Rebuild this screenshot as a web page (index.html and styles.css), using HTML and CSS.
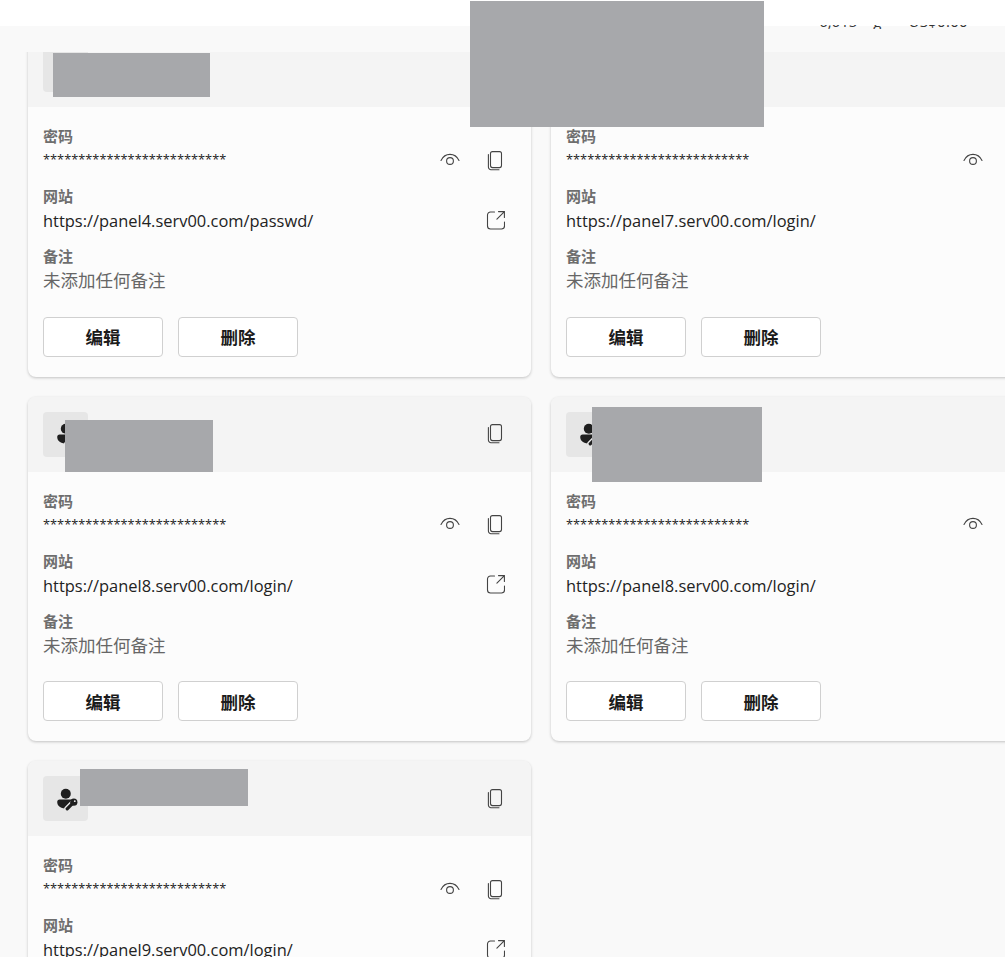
FILE: index.html
```html
<!DOCTYPE html>
<html>
<head>
  <title>密码管理</title>
  <link rel="stylesheet" href="styles.css">
</head>
<body>

  <svg class="defs" width="0" height="0">
    <symbol id="i-copy" viewBox="0 0 20 20">
      <rect x="5.500" y="0.600" width="11" height="16" rx="2" fill="none" stroke="currentColor" stroke-width="1.100"/>
      <path d="M3.400 3.500v12.600A2.600 2.600 0 0 0 6 18.700h8" fill="none" stroke="currentColor" stroke-width="1.100" stroke-linecap="round"/>
    </symbol>
    <symbol id="i-eye" viewBox="0 0 20 20">
      <path d="M1 9.500C3 5.400 6.200 3.400 10 3.400s7 2 9 6.100" fill="none" stroke="currentColor" stroke-width="1.100" stroke-linecap="round"/>
      <circle cx="10" cy="10" r="3.400" fill="none" stroke="currentColor" stroke-width="1.100"/>
    </symbol>
    <symbol id="i-open" viewBox="0 0 20 20">
      <path d="M9.500 1H5.500A3 3 0 0 0 2.500 4v11a3 3 0 0 0 3 3h11a3 3 0 0 0 3-3v-4" fill="none" stroke="currentColor" stroke-width="1.100" stroke-linecap="round"/>
      <path d="M13.500 0.600h5.900v5.900M19.400 0.600l-7.500 7.500" fill="none" stroke="currentColor" stroke-width="1.100" stroke-linecap="round"/>
    </symbol>
    <symbol id="i-user" viewBox="0 0 24 24">
      <circle cx="11.800" cy="6.800" r="5" fill="currentColor"/>
      <path d="M3.200 15a2.500 2.500 0 0 1 2.500-2.500h11c2 0 4 1.500 4 3L13 21.700C7.500 21.700 3.200 19.500 3.200 15z" fill="currentColor"/>
      <path d="M13.200 21.800l6.400-6.400" stroke="#e6e6e6" stroke-width="6" stroke-linecap="round"/>
      <path d="M13.200 21.800l6.400-6.400" stroke="currentColor" stroke-width="3.200" stroke-linecap="round"/>
      <circle cx="19.800" cy="15.200" r="3.600" fill="currentColor"/>
      <circle cx="20.800" cy="14.200" r="0.900" fill="#e6e6e6"/>
    </symbol>
  </svg>

  <div class="topbar">
    <div class="topbar-stats">
      <div class="topbar-line">
        <span class="stat-count">6,615</span>
        <span class="stat-unit">g</span>
        <span class="stat-money">US$0.00</span>
      </div>
    </div>
  </div>

  <div class="content">
    <div class="card-grid">

      <div class="card">
        <div class="card-head">
          <div class="avatar"><svg class="icon-user"><use href="#i-user"/></svg></div>
          <button class="icon-btn"><svg class="icon"><use href="#i-copy"/></svg></button>
        </div>
        <div class="card-body">
          <div class="field">
            <div class="label">密码</div>
            <div class="row">
              <div class="stars">**************************</div>
              <button class="icon-btn"><svg class="icon"><use href="#i-eye"/></svg></button>
              <button class="icon-btn"><svg class="icon"><use href="#i-copy"/></svg></button>
            </div>
          </div>
          <div class="field">
            <div class="label">网站</div>
            <div class="row">
              <div class="url">https://panel4.serv00.com/passwd/</div>
              <button class="icon-btn"><svg class="icon"><use href="#i-open"/></svg></button>
            </div>
          </div>
          <div class="field">
            <div class="label">备注</div>
            <div class="row"><div class="note">未添加任何备注</div></div>
          </div>
          <div class="actions">
            <button class="btn">编辑</button>
            <button class="btn">删除</button>
          </div>
        </div>
      </div>

      <div class="card">
        <div class="card-head">
          <div class="avatar"><svg class="icon-user"><use href="#i-user"/></svg></div>
          <button class="icon-btn"><svg class="icon"><use href="#i-copy"/></svg></button>
        </div>
        <div class="card-body">
          <div class="field">
            <div class="label">密码</div>
            <div class="row">
              <div class="stars">**************************</div>
              <button class="icon-btn"><svg class="icon"><use href="#i-eye"/></svg></button>
              <button class="icon-btn"><svg class="icon"><use href="#i-copy"/></svg></button>
            </div>
          </div>
          <div class="field">
            <div class="label">网站</div>
            <div class="row">
              <div class="url">https://panel7.serv00.com/login/</div>
              <button class="icon-btn"><svg class="icon"><use href="#i-open"/></svg></button>
            </div>
          </div>
          <div class="field">
            <div class="label">备注</div>
            <div class="row"><div class="note">未添加任何备注</div></div>
          </div>
          <div class="actions">
            <button class="btn">编辑</button>
            <button class="btn">删除</button>
          </div>
        </div>
      </div>

      <div class="card">
        <div class="card-head">
          <div class="avatar"><svg class="icon-user"><use href="#i-user"/></svg></div>
          <button class="icon-btn"><svg class="icon"><use href="#i-copy"/></svg></button>
        </div>
        <div class="card-body">
          <div class="field">
            <div class="label">密码</div>
            <div class="row">
              <div class="stars">**************************</div>
              <button class="icon-btn"><svg class="icon"><use href="#i-eye"/></svg></button>
              <button class="icon-btn"><svg class="icon"><use href="#i-copy"/></svg></button>
            </div>
          </div>
          <div class="field">
            <div class="label">网站</div>
            <div class="row">
              <div class="url">https://panel8.serv00.com/login/</div>
              <button class="icon-btn"><svg class="icon"><use href="#i-open"/></svg></button>
            </div>
          </div>
          <div class="field">
            <div class="label">备注</div>
            <div class="row"><div class="note">未添加任何备注</div></div>
          </div>
          <div class="actions">
            <button class="btn">编辑</button>
            <button class="btn">删除</button>
          </div>
        </div>
      </div>

      <div class="card">
        <div class="card-head">
          <div class="avatar"><svg class="icon-user"><use href="#i-user"/></svg></div>
          <button class="icon-btn"><svg class="icon"><use href="#i-copy"/></svg></button>
        </div>
        <div class="card-body">
          <div class="field">
            <div class="label">密码</div>
            <div class="row">
              <div class="stars">**************************</div>
              <button class="icon-btn"><svg class="icon"><use href="#i-eye"/></svg></button>
              <button class="icon-btn"><svg class="icon"><use href="#i-copy"/></svg></button>
            </div>
          </div>
          <div class="field">
            <div class="label">网站</div>
            <div class="row">
              <div class="url">https://panel8.serv00.com/login/</div>
              <button class="icon-btn"><svg class="icon"><use href="#i-open"/></svg></button>
            </div>
          </div>
          <div class="field">
            <div class="label">备注</div>
            <div class="row"><div class="note">未添加任何备注</div></div>
          </div>
          <div class="actions">
            <button class="btn">编辑</button>
            <button class="btn">删除</button>
          </div>
        </div>
      </div>

      <div class="card">
        <div class="card-head">
          <div class="avatar"><svg class="icon-user"><use href="#i-user"/></svg></div>
          <button class="icon-btn"><svg class="icon"><use href="#i-copy"/></svg></button>
        </div>
        <div class="card-body">
          <div class="field">
            <div class="label">密码</div>
            <div class="row">
              <div class="stars">**************************</div>
              <button class="icon-btn"><svg class="icon"><use href="#i-eye"/></svg></button>
              <button class="icon-btn"><svg class="icon"><use href="#i-copy"/></svg></button>
            </div>
          </div>
          <div class="field">
            <div class="label">网站</div>
            <div class="row">
              <div class="url">https://panel9.serv00.com/login/</div>
              <button class="icon-btn"><svg class="icon"><use href="#i-open"/></svg></button>
            </div>
          </div>
        </div>
      </div>

    </div>
  </div>

  <div class="redact redact-1"></div>
  <div class="redact redact-2"></div>
  <div class="redact redact-3"></div>
  <div class="redact redact-4"></div>
  <div class="redact redact-5"></div>

</body>
</html>
```

FILE: styles.css
```css
html, body {
  height: 100%;
}
body {
  margin: 0;
  overflow: hidden;
  background: #f9f9f9;
  font-family: "Open Sans", "Noto Sans CJK SC", sans-serif;
  color: #1b1b1b;
  display: flex;
  flex-direction: column;
  position: relative;
}
.defs {
  position: absolute;
}
.topbar {
  height: 26px;
  flex: none;
  background: #fff;
  display: flex;
  justify-content: flex-end;
  padding-right: 37px;
  box-sizing: border-box;
}
.topbar-stats {
  height: 4px;
  margin-top: 25px;
  overflow: hidden;
}
.topbar-line {
  display: flex;
  align-items: baseline;
  font-size: 15px;
  line-height: 18px;
  margin-top: -13.300px;
  color: #333;
}
.stat-unit {
  margin-left: 16px;
}
.stat-money {
  margin-left: 27px;
  letter-spacing: 0.300px;
}
.content {
  flex: 1;
  margin-top: 26px;
  overflow: hidden;
  min-height: 0;
}
.card-grid {
  display: grid;
  grid-template-columns: 503px 503px;
  gap: 20px;
  margin-top: -19.750px;
  margin-left: 28px;
  padding-bottom: 4px;
}
.card {
  background: #fcfcfc;
  border-radius: 8px;
  box-shadow: 0 1px 3px rgba(0, 0, 0, 0.22);
  overflow: hidden;
}
.card-head {
  height: 75px;
  box-sizing: border-box;
  background: #f4f4f4;
  padding: 0 26px 0 15px;
  display: flex;
  align-items: center;
  justify-content: space-between;
}
.avatar {
  width: 45px;
  height: 45px;
  border-radius: 4px;
  background: #e6e6e6;
  display: flex;
  align-items: center;
  justify-content: center;
}
.icon-user {
  width: 24px;
  height: 24px;
  color: #1f1f1f;
}
.card-body {
  padding: 19px 15px 20px;
}
.field {
  margin-bottom: 13px;
}
.label {
  font-size: 15px;
  line-height: 21px;
  padding-bottom: 1px;
  font-weight: 700;
  color: #6e6e6e;
}
.row {
  display: flex;
  align-items: center;
  height: 25px;
}
.stars, .url, .note {
  flex: 1;
}
.stars {
  font-size: 12.800px;
  line-height: 23px;
  height: 25px;
  color: #222;
}
.url {
  font-size: 16.450px;
  color: #222;
}
.note {
  font-size: 17.500px;
  line-height: 25px;
  height: 25px;
  color: #666;
}
.icon-btn {
  border: none;
  background: none;
  padding: 0;
  width: 20px;
  height: 20px;
  color: #444;
  display: block;
}
.row .icon-btn + .icon-btn {
  margin-left: 25px;
}
.row .icon-btn:first-of-type:not(:last-child) {
  margin-left: 1px;
}
.row .icon-btn:last-child {
  margin-right: 11px;
}
.icon {
  width: 20px;
  height: 20px;
  display: block;
}
.actions {
  display: flex;
  gap: 15px;
  margin-top: 23.500px;
}
.btn {
  width: 120px;
  height: 40px;
  background: #fff;
  border: 1px solid #d0d0d0;
  border-radius: 4px;
  font-family: inherit;
  font-size: 17.500px;
  font-weight: 700;
  color: #1b1b1b;
}
.redact {
  position: absolute;
  background: #a7a8ab;
}
.redact-1 { left: 53px; top: 53px; width: 157px; height: 44px; }
.redact-2 { left: 470px; top: 1px; width: 294px; height: 126px; }
.redact-3 { left: 65px; top: 420px; width: 148px; height: 52px; }
.redact-4 { left: 592px; top: 407px; width: 170px; height: 75px; }
.redact-5 { left: 80px; top: 769px; width: 168px; height: 37px; }
```
